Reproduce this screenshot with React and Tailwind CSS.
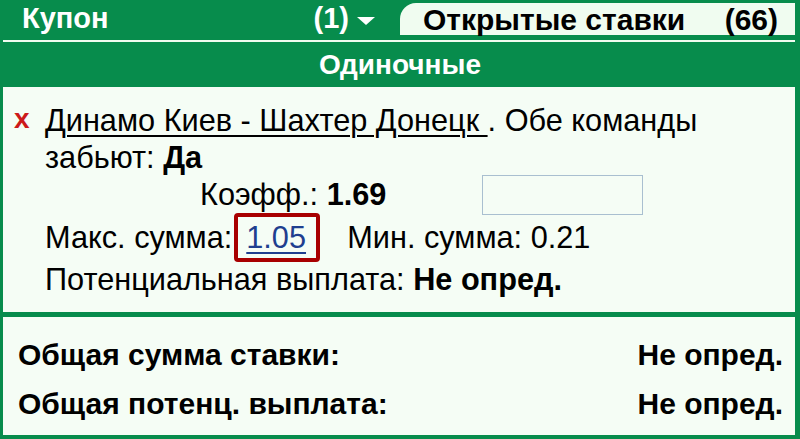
export default function App() {
  return (
    <div
      className="w-[800px] h-[439px] bg-[#078c4c] flex flex-col overflow-hidden"
      style={{ fontFamily: '"Liberation Sans", Arial, sans-serif' }}
    >
      {/* Tabs */}
      <div className="h-[40px] flex items-start">
        <div className="w-[400px] h-[38px] flex items-center justify-between pl-[22px] pr-[25px]">
          <span className="text-white font-bold text-[29px]">Купон</span>
          <span className="text-white font-bold text-[29px] flex items-center gap-[8px]">
            (1)
            <svg width="18" height="8" viewBox="0 0 18 8" className="mt-[3px]">
              <path d="M0 0 L18 0 L9 8 Z" fill="#ffffff" />
            </svg>
          </span>
        </div>
        <div className="mt-[3px] w-[395px] h-[32px] bg-[#f0fcf0] rounded-tl-[16px] flex items-center justify-between pl-[23px] pr-[17px]">
          <span className="text-black font-bold text-[30px]">Открытые ставки</span>
          <span className="text-black font-bold text-[30px]">(66)</span>
        </div>
      </div>
      <div className="h-[2px] ml-[3px] mr-[5px] bg-[#f0fcf0]" />

      {/* Section header */}
      <div className="h-[45px] flex items-center justify-center">
        <span className="text-white font-bold text-[28px]">Одиночные</span>
      </div>

      {/* Bet */}
      <div className="ml-[3px] mr-[5px] h-[225px] bg-[#f5fdf5] pl-[11px] pt-[15px] text-[30.7px] text-black leading-[37px]">
        <div className="flex">
          <span className="text-[#cc1a1a] font-bold text-[28px] w-[31px] leading-[33px]">x</span>
          <div>
            <span className="underline decoration-[2px] underline-offset-[4px]">Динамо Киев - Шахтер Донецк </span>
            <span>. Обе команды</span>
            <br />
            забьют: <b>Да</b>
          </div>
        </div>
        <div className="flex items-center h-[37px] pl-[186px]">
          <span>
            Коэфф.: <b>1.69</b>
          </span>
          <div className="ml-[96px] w-[161px] h-[40px] border border-[#a9bfd0] bg-[#f5fdf5]" />
        </div>
        <div className="flex items-center h-[49px] pl-[31px]">
          <span>Макс. сумма:</span>
          <span className="ml-[2px] w-[86px] h-[49px] border-[4px] border-[#a80000] rounded-[4px] pl-[8px] flex items-center">
            <span className="text-[#1f3f8f] underline decoration-[2px] underline-offset-[4px]">1.05 </span>
          </span>
          <span className="ml-[27px]">Мин. сумма: 0.21</span>
        </div>
        <div className="pl-[31px] h-[35px] flex items-center">
          <span>
            Потенциальная выплата: <b>Не опред.</b>
          </span>
        </div>
      </div>

      <div className="h-[5px]" />

      {/* Totals */}
      <div className="ml-[3px] mr-[5px] h-[118px] bg-[#f5fdf5] pl-[15px] pr-[12px] pt-[17px] flex flex-col gap-[9px] text-[30px] font-bold text-black">
        <div className="flex justify-between h-[40px] items-center">
          <span>Общая сумма ставки:</span>
          <span>Не опред.</span>
        </div>
        <div className="flex justify-between h-[40px] items-center">
          <span>Общая потенц. выплата:</span>
          <span>Не опред.</span>
        </div>
      </div>
    </div>
  )
}
